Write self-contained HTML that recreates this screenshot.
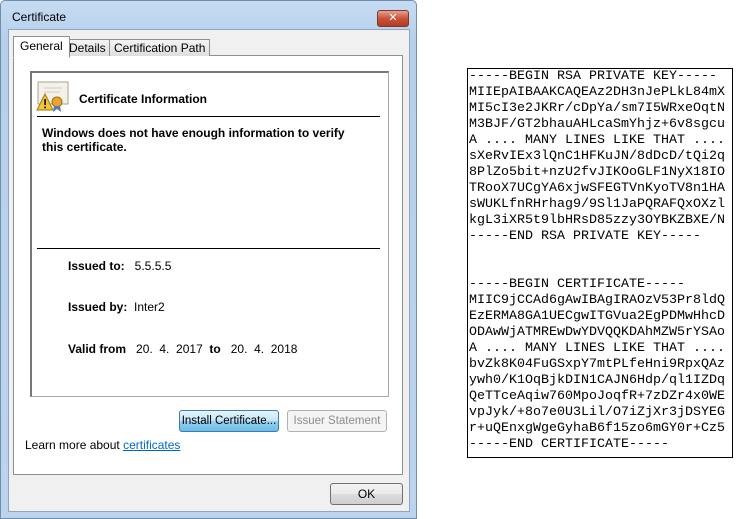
<!DOCTYPE html>
<html><head><style>
body{margin:0;width:741px;height:519px;background:#fff;position:relative;overflow:hidden;font-family:"Liberation Sans","DejaVu Sans",sans-serif;}
.a{position:absolute;white-space:nowrap;}
.win{left:0;top:0;width:415px;height:517px;border:1px solid #6d8fae;background:linear-gradient(#c7dcf2,#b6cfea 40px,#bcd4ee);border-radius:5px 5px 0 0;}
.body{left:8px;top:29px;width:400px;height:481px;background:#f0f0f0;border:1px solid #8fa6bf;}
.t{font-size:12px;color:#000;}
.tab{top:37px;height:18px;border:1px solid #8e8f8f;border-bottom:none;background:linear-gradient(#f4f4f4,#dedede);font-size:12px;line-height:18px;padding:0 4px;}
.panel{left:13px;top:55px;width:388px;height:418px;background:#fff;border:1px solid #8e8f8f;}
.inner{left:30px;top:71px;width:356px;height:323px;border:1px solid #aaa;border-left:2px solid #777;border-top:2px solid #777;background:#fff;}
.btn{height:20px;border:1px solid #707070;border-radius:3px;font-size:11.5px;text-align:center;line-height:20px;background:linear-gradient(#f2f2f2,#ebebeb 50%,#dddddd 50%,#cfcfcf);overflow:hidden;}
pre{margin:0;font-family:"Liberation Mono",monospace;font-size:13.33px;line-height:16px;color:#000;white-space:pre !important;}
</style></head><body>
<div class="a win"></div>
<div class="a t" style="left:12px;top:10px;font-size:12px;">Certificate</div>
<div class="a" style="left:377px;top:10px;width:30px;height:15px;border:1px solid #7a3a30;border-radius:3px;background:linear-gradient(#e8a190,#c9523c 50%,#b83a22);color:#fff;font-size:11px;font-weight:bold;text-align:center;line-height:15px;">✕</div>
<div class="a body"></div>
<div class="a panel"></div>
<div class="a tab" style="left:64px;top:39px;height:16px;line-height:16px;">Details</div>
<div class="a tab" style="left:109px;top:39px;height:16px;line-height:16px;">Certification Path</div>
<div class="a tab" style="left:13px;top:36px;height:20px;background:#fff;padding:0 6px;border-bottom:1px solid #fff;">General</div>
<div class="a inner"></div>
<svg class="a" style="left:36px;top:81px" width="34" height="32" viewBox="0 0 34 32">
<rect x="2" y="1" width="30" height="22" fill="#f4f1e6" stroke="#a9a39a"/>
<line x1="8" y1="7" x2="26" y2="7" stroke="#ccc"/><line x1="8" y1="11" x2="24" y2="11" stroke="#ccc"/>
<polygon points="9,13 1,29 17,29" fill="#f2c53b" stroke="#a07a10"/>
<rect x="8.2" y="18" width="1.8" height="6" fill="#222"/><rect x="8.2" y="25.5" width="1.8" height="1.8" fill="#222"/>
<circle cx="21" cy="21" r="5" fill="#e7a630" stroke="#a36b14"/>
<polygon points="18,25 17,31 21,28 25,31 24,25" fill="#5778b8"/>
</svg>
<div class="a" style="left:79px;top:92px;font-size:12px;font-weight:bold;">Certificate Information</div>
<div class="a" style="left:37px;top:116px;width:343px;height:1px;background:#000;"></div>
<div class="a" style="left:42px;top:126px;font-size:12px;font-weight:bold;line-height:14px;">Windows does not have enough information to verify<br>this certificate.</div>
<div class="a" style="left:37px;top:248px;width:343px;height:1px;background:#000;"></div>
<div class="a t" style="left:68px;top:259px;"><b>Issued to:</b>&nbsp;&nbsp; 5.5.5.5</div>
<div class="a t" style="left:68px;top:300px;"><b>Issued by:</b>&nbsp; Inter2</div>
<div class="a t" style="left:68px;top:342px;"><b>Valid from</b>&nbsp;&nbsp; 20.&nbsp; 4.&nbsp; 2017&nbsp; <b>to</b>&nbsp;&nbsp; 20.&nbsp; 4.&nbsp; 2018</div>
<div class="a btn" style="left:179px;top:410px;width:98px;border-color:#3c7fb1;background:linear-gradient(#e5f4fc,#c4e5f6 50%,#98d1ef 50%,#6cbde8);">Install Certificate...</div>
<div class="a btn" style="left:287px;top:410px;width:98px;border-color:#adb2b5;background:#f4f4f4;color:#8d8d8d;">Issuer Statement</div>
<div class="a t" style="left:25px;top:438px;">Learn more about <span style="color:#0066cc;text-decoration:underline;">certificates</span></div>
<div class="a btn" style="left:330px;top:483px;width:71px;font-size:12px;">OK</div>
<div class="a" style="left:467px;top:68px;width:264px;height:388px;border:1px solid #000;"></div>
<pre class="a" style="left:469px;top:69px;">-----BEGIN RSA PRIVATE KEY-----
MIIEpAIBAAKCAQEAz2DH3nJePLkL84mX
MI5cI3e2JKRr/cDpYa/sm7I5WRxeOqtN
M3BJF/GT2bhauAHLcaSmYhjz+6v8sgcu
A .... MANY LINES LIKE THAT ....
sXeRvIEx3lQnC1HFKuJN/8dDcD/tQi2q
8PlZo5bit+nzU2fvJIKOoGLF1NyX18IO
TRooX7UCgYA6xjwSFEGTVnKyoTV8n1HA
sWUKLfnRHrhag9/9Sl1JaPQRAFQxOXzl
kgL3iXR5t9lbHRsD85zzy3OYBKZBXE/N
-----END RSA PRIVATE KEY-----


-----BEGIN CERTIFICATE-----
MIIC9jCCAd6gAwIBAgIRAOzV53Pr8ldQ
EzERMA8GA1UECgwITGVua2EgPDMwHhcD
ODAwWjATMREwDwYDVQQKDAhMZW5rYSAo
A .... MANY LINES LIKE THAT ....
bvZk8K04FuGSxpY7mtPLfeHni9RpxQAz
ywh0/K1OqBjkDIN1CAJN6Hdp/ql1IZDq
QeTTceAqiw760MpoJoqfR+7zDZr4x0WE
vpJyk/+8o7e0U3Lil/O7iZjXr3jDSYEG
r+uQEnxgWgeGyhaB6f15zo6mGY0r+Cz5
-----END CERTIFICATE-----</pre>
</body></html>
